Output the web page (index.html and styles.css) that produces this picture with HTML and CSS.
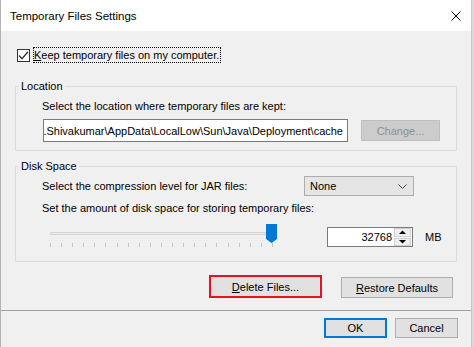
FILE: index.html
```html
<!DOCTYPE html>
<html lang="en">
<head>
    <meta charset="UTF-8">
    <title>Temporary Files Settings</title>
    <link rel="stylesheet" href="styles.css">
</head>
<body>
    <div class="window">
        <!-- title bar -->
        <div class="titlebar">
            <span class="title">Temporary Files Settings</span>
            <svg class="close" width="10" height="10" viewBox="0 0 10 10" fill="none" stroke="#000" stroke-width="1">
                <path d="M0.5 0.5l9 9M9.5 0.5l-9 9"/>
            </svg>
        </div>

        <div class="content">
            <label class="check-row">
                <span class="checkbox">
                    <svg width="11" height="11" viewBox="0 0 11 11" fill="none" stroke="#333" stroke-width="1.3">
                        <path d="M1 5.5l3 3.2L10 1.8"/>
                    </svg>
                </span>
                <span class="check-label"><u>K</u>eep temporary files on my computer.</span>
            </label>

            <!-- location -->
            <fieldset class="group">
                <legend>Location</legend>
                <div class="group-body">
                    <div class="line">Select the location where temporary files are kept:</div>
                    <div class="path-row">
                        <div class="path-field"><span>C:\Users\Hari.Shivakumar\AppData\LocalLow\Sun\Java\Deployment\cache</span></div>
                        <button class="btn btn-change" disabled>Chan<u>g</u>e...</button>
                    </div>
                </div>
            </fieldset>

            <!-- disk space -->
            <fieldset class="group group-disk">
                <legend>Disk Space</legend>
                <div class="group-body">
                    <div class="compress-row">
                        <span>Select the compression level for JAR files:</span>
                        <div class="combo">
                            <span>None</span>
                            <svg width="9" height="5" viewBox="0 0 9 5" fill="none" stroke="#444" stroke-width="1">
                                <path d="M0.5 0.5l4 4 4-4"/>
                            </svg>
                        </div>
                    </div>
                    <div class="line line-space">Set the amount of disk space for storing temporary files:</div>
                    <div class="slider-row">
                        <div class="slider">
                            <div class="track"></div>
                            <div class="ticks">
                                <i></i><i></i><i></i><i></i><i></i><i></i><i></i>
                                <i></i><i></i><i></i><i></i><i></i><i></i><i></i>
                                <i></i><i></i><i></i><i></i><i></i><i></i><i></i>
                            </div>
                            <svg class="thumb" width="11" height="19" viewBox="0 0 11 19">
                                <path d="M0 0h11v15l-5.5 4L0 15z" fill="#0078d7"/>
                            </svg>
                        </div>
                        <div class="spinner">
                            <span class="spin-value">32768</span>
                            <div class="spin-buttons">
                                <span class="spin-btn">
                                    <svg width="7" height="4" viewBox="0 0 7 4"><path d="M0 4h7L3.5 0.5z" fill="#000"/></svg>
                                </span>
                                <span class="spin-btn">
                                    <svg width="7" height="4" viewBox="0 0 7 4"><path d="M0 0h7L3.5 3.5z" fill="#000"/></svg>
                                </span>
                            </div>
                        </div>
                        <span class="unit">MB</span>
                    </div>
                </div>
            </fieldset>

            <div class="actions">
                <button class="btn btn-marked"><u>D</u>elete Files...</button>
                <button class="btn btn-restore"><u>R</u>estore Defaults</button>
            </div>
        </div>

        <div class="separator"></div>

        <div class="footer">
            <button class="btn btn-default">OK</button>
            <button class="btn">Cancel</button>
        </div>
    </div>
</body>
</html>
```

FILE: styles.css
```css
:root {
    --face: #f0f0f0;
    --btn: #e1e1e1;
    --btn-border: #adadad;
    --group-border: #dcdcdc;
    --accent: #0078d7;
}

body {
    margin: 0;
    background: #dadada;
    font-family: "Liberation Sans", Arial, sans-serif;
    font-size: 11px;
    color: #000;
}

.window {
    width: 472px;
    height: 347px;
    box-sizing: border-box;
    background: var(--face);
    border-left: 1px solid #b4b4b4;
    border-right: 1px solid #c8c8c8;
    display: flex;
    flex-direction: column;
}

/* title bar */
.titlebar {
    height: 31px;
    flex: none;
    background: #fff;
    display: flex;
    align-items: center;
    justify-content: space-between;
    padding: 0 10px 0 9px;
}

.title {
    font-size: 11.5px;
    line-height: 16px;
}

.content {
    padding-left: 14px;
}

/* checkbox */
.check-row {
    display: flex;
    align-items: center;
    margin: 16px 0 0 2px;
    height: 16px;
}

.checkbox {
    width: 13px;
    height: 13px;
    box-sizing: border-box;
    border: 1px solid #333;
    background: #fff;
    display: grid;
    place-items: center;
}

.check-label {
    margin-left: 3px;
    border: 1px dotted #000;
    line-height: 14px;
    padding: 0 1px 0 0;
}

/* group boxes */
.group {
    width: 442px;
    box-sizing: border-box;
    margin: 15px 0 0;
    padding: 0 0 8px 3px;
    border: 1px solid var(--group-border);
    min-width: 0;
}

.group legend {
    padding: 0 2px;
    line-height: 16px;
}

.group-body {
    padding-left: 23px;
}

.line {
    margin-top: 4px;
    line-height: 16px;
}

.path-row {
    display: flex;
    align-items: center;
    margin-top: 5px;
}

.path-field {
    width: 305px;
    height: 23px;
    box-sizing: border-box;
    margin-left: 1px;
    border: 1px solid #7a7a7a;
    background: #fff;
    overflow: hidden;
    display: flex;
    justify-content: flex-end;
    align-items: center;
    padding-right: 4px;
    white-space: nowrap;
}

/* buttons */
.btn {
    font: inherit;
    color: #000;
    background: var(--btn);
    border: 1px solid var(--btn-border);
    padding: 0;
    height: 21px;
    box-sizing: border-box;
}

.btn-change {
    margin-left: 13px;
    width: 79px;
    background: #cccccc;
    border-color: #bfbfbf;
    color: #8f8f8f;
}

.group-disk {
    margin-top: 7px;
    padding-bottom: 13px;
}

.compress-row {
    display: grid;
    grid-template-columns: 262px 110px;
    align-items: center;
    margin-top: 2px;
}

.combo {
    height: 20px;
    box-sizing: border-box;
    border: 1px solid #adadad;
    background: #e5e5e5;
    display: flex;
    align-items: center;
    justify-content: space-between;
    padding: 0 6px 0 5px;
}

.line-space {
    margin-top: 4px;
}

/* slider */
.slider-row {
    display: flex;
    align-items: flex-start;
    margin-top: 8px;
}

.slider {
    position: relative;
    margin-left: 8px;
    width: 228px;
    height: 24px;
}

.track {
    margin-top: 8px;
    width: 222px;
    height: 3px;
    box-sizing: border-box;
    border: 1px solid #d6d6d6;
    background: #e7eaea;
}

.ticks {
    margin-top: 8px;
    width: 223px;
    display: flex;
    justify-content: space-between;
}

.ticks i {
    width: 1px;
    height: 4px;
    background: #c4c4c4;
}

.thumb {
    position: absolute;
    left: 216px;
    top: 0;
}

.spinner {
    margin: 3px 0 0 49px;
    width: 86px;
    height: 20px;
    box-sizing: border-box;
    border: 1px solid #7a7a7a;
    background: #fff;
    display: flex;
    align-items: center;
}

.spin-value {
    flex: 1;
    text-align: right;
    padding-right: 2px;
}

.spin-buttons {
    width: 17px;
    height: 18px;
    display: flex;
    flex-direction: column;
    gap: 1px;
    padding: 0 1px 0 0;
}

.spin-btn {
    flex: 1;
    display: grid;
    place-items: center;
    background: #f0f0f0;
    border: 1px solid #d0d0d0;
}

.unit {
    margin: 3px 0 0 12px;
    line-height: 20px;
}

/* bottom buttons */
.actions {
    display: flex;
    justify-content: flex-end;
    align-items: flex-end;
    margin: 13px 18px 0 0;
}

.btn-marked {
    width: 113px;
    height: 23px;
    border: 2px solid #e81123;
    margin-right: 19px;
}

.btn-restore {
    width: 112px;
}

.separator {
    margin-top: 12px;
    height: 1px;
    background: #a0a0a0;
}

.footer {
    display: flex;
    justify-content: flex-end;
    gap: 8px;
    margin-top: 7px;
    padding-right: 13px;
}

.footer .btn {
    width: 63px;
    height: 20px;
}

.footer .btn-default {
    border: 2px solid var(--accent);
}
```
